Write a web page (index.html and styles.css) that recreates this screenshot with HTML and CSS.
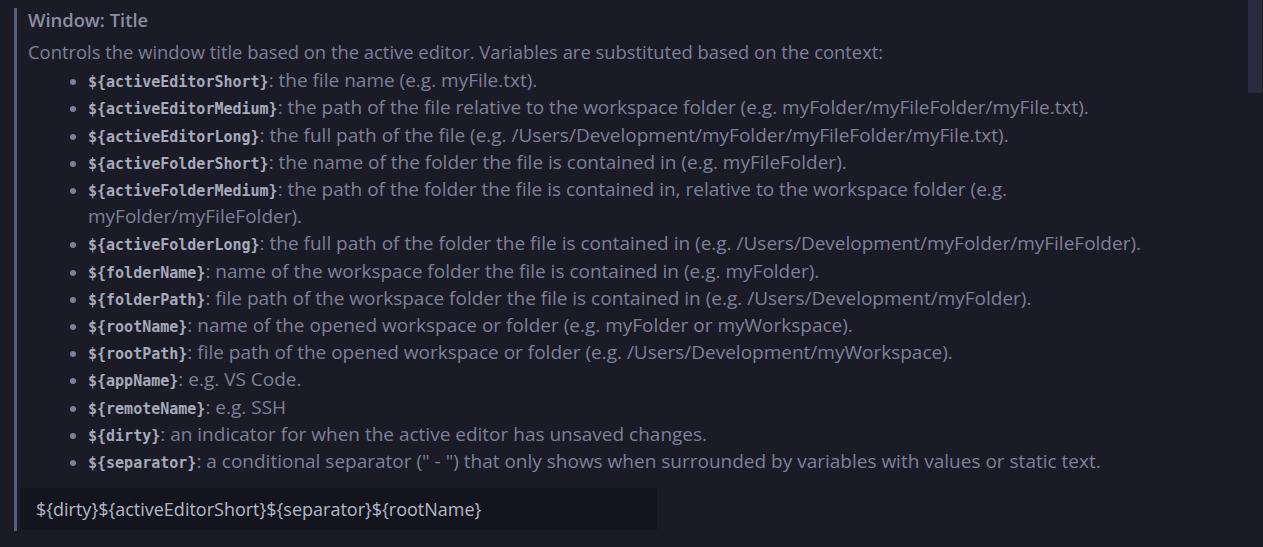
FILE: index.html
```html
<!DOCTYPE html>
<html>
<head>
<meta charset="utf-8">
<link rel="stylesheet" href="styles.css">
</head>
<body>
<div class="page">
  <div class="setting">
    <div class="title"><span class="cat">Window: </span><span class="name">Title</span></div>
    <div class="desc">
      <p class="lead">Controls the window title based on the active editor. Variables are substituted based on the context:</p>
      <ul class="vars">
        <li><code>${activeEditorShort}</code>: the file name (e.g. myFile.txt).</li>
        <li><code>${activeEditorMedium}</code>: the path of the file relative to the workspace folder (e.g. myFolder/myFileFolder/myFile.txt).</li>
        <li><code>${activeEditorLong}</code>: the full path of the file (e.g. /Users/Development/myFolder/myFileFolder/myFile.txt).</li>
        <li><code>${activeFolderShort}</code>: the name of the folder the file is contained in (e.g. myFileFolder).</li>
        <li><code>${activeFolderMedium}</code>: the path of the folder the file is contained in, relative to the workspace folder (e.g. myFolder/myFileFolder).</li>
        <li><code>${activeFolderLong}</code>: the full path of the folder the file is contained in (e.g. /Users/Development/myFolder/myFileFolder).</li>
        <li><code>${folderName}</code>: name of the workspace folder the file is contained in (e.g. myFolder).</li>
        <li><code>${folderPath}</code>: file path of the workspace folder the file is contained in (e.g. /Users/Development/myFolder).</li>
        <li><code>${rootName}</code>: name of the opened workspace or folder (e.g. myFolder or myWorkspace).</li>
        <li><code>${rootPath}</code>: file path of the opened workspace or folder (e.g. /Users/Development/myWorkspace).</li>
        <li><code>${appName}</code>: e.g. VS Code.</li>
        <li><code>${remoteName}</code>: e.g. SSH</li>
        <li><code>${dirty}</code>: an indicator for when the active editor has unsaved changes.</li>
        <li><code>${separator}</code>: a conditional separator (" - ") that only shows when surrounded by variables with values or static text.</li>
      </ul>
    </div>
    <div class="input">${dirty}${activeEditorShort}${separator}${rootName}</div>
  </div>
  <div class="scrollbar"><div class="thumb"></div></div>
</div>
</body>
</html>
```
FILE: styles.css
```css
html, body {
  margin: 0;
  padding: 0;
  background: #1b1b27;
  height: 100%;
}
body {
  font-family: "Open Sans", "Noto Sans", sans-serif;
  font-size: 18.4px;
  color: #7d8197;
  overflow: hidden;
}
.page {
  position: relative;
  height: 547px;
  padding-top: 8px;
  box-sizing: border-box;
}
.setting {
  margin-left: 14px;
  border-left: 3px solid #59617a;
  padding-left: 11px;
  width: 1172px;
  padding-bottom: 1px;
}
.title {
  font-size: 18.4px;
  line-height: 24px;
  font-weight: 600;
  color: #8a8ea2;
}
.desc {
  line-height: 27.2px;
  margin-top: 6px;
}
.lead {
  margin: 0;
}
.vars {
  margin: 2px 0 0;
  padding-left: 60px;
  list-style: disc;
  font-size: 19px;
}
.vars li::marker {
  color: #7d8197;
  font-size: 16px;
}
code {
  font-family: "DejaVu Sans Mono", "Liberation Mono", monospace;
  font-weight: bold;
  font-size: 15px;
  line-height: 1;
  color: #a6aabb;
}
.input {
  margin-top: 13px;
  margin-left: -8px;
  width: 637px;
  height: 42px;
  box-sizing: border-box;
  background: #14141e;
  padding-left: 16px;
  line-height: 42px;
  color: #b4b8c8;
  font-size: 18px;
}
.scrollbar {
  position: absolute;
  top: 0;
  right: 1px;
  width: 14px;
  height: 547px;
}
.thumb {
  height: 93px;
  background: #2a2b3f;
}
```
